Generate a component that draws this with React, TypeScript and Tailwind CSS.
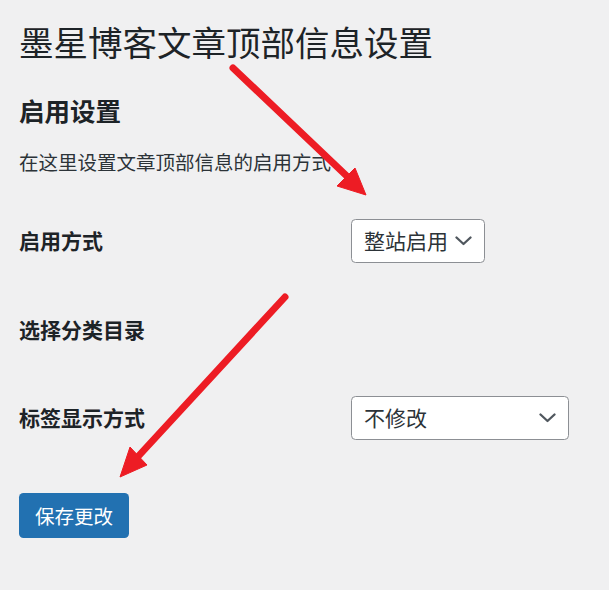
import React from 'react';

const font = { fontFamily: '"Noto Sans CJK SC", "Noto Sans", sans-serif' };

function Chevron() {
  return (
    <svg width="17" height="10" viewBox="0 0 17 10" className="shrink-0">
      <polyline points="1.5,1.5 8.5,8 15.5,1.5" fill="none" stroke="#50575e" strokeWidth="2.3" strokeLinecap="round" strokeLinejoin="round" />
    </svg>
  );
}

function Select({ value, width }: { value: string; width: string }) {
  return (
    <div className={`${width} h-[44px] flex items-center justify-between pl-[12px] pr-[12px] bg-white border border-[#8c8f94] rounded-[4.5px] text-[21px] text-[#2c3338]`}>
      <span>{value}</span>
      <Chevron />
    </div>
  );
}

function Row({ label, children, h }: { label: string; children?: React.ReactNode; h: string }) {
  return (
    <div className={`flex items-center ${h}`}>
      <div className="w-[332px] shrink-0 text-[21px] font-bold text-[#1d2327]">{label}</div>
      {children}
    </div>
  );
}

export default function App() {
  return (
    <div className="relative w-full h-[590px] bg-[#f0f0f1] overflow-hidden pl-[19px]" style={font}>
      <div className="h-[84px] flex items-center text-[34.5px] text-[#1d2327]">墨星博客文章顶部信息设置</div>
      <div className="h-[52px] flex items-center text-[25.5px] font-bold text-[#1d2327]">启用设置</div>
      <div className="h-[52px] flex items-center text-[19.5px] text-[#2c3338]">在这里设置文章顶部信息的启用方式</div>

      <div className="mt-[8px]">
        <Row label="启用方式" h="h-[89px]">
          <Select value="整站启用" width="w-[134px]" />
        </Row>
        <Row label="选择分类目录" h="h-[89px]" />
        <Row label="标签显示方式" h="h-[88px]">
          <Select value="不修改" width="w-[218px]" />
        </Row>
      </div>

      <button className="mt-[31px] h-[45px] w-[110px] bg-[#2271b1] rounded-[4.5px] text-white text-[19.5px]">保存更改</button>

      {/* red annotation arrows */}
      <svg className="absolute inset-0 pointer-events-none" width="609" height="590" viewBox="0 0 609 590">
        <g fill="#ed1c24" stroke="#ed1c24">
          <line x1="233" y1="68" x2="352" y2="181" strokeWidth="7" strokeLinecap="round" />
          <polygon points="366,195 337,186 355,168" strokeWidth="1" strokeLinejoin="round" />
          <line x1="285" y1="297" x2="133" y2="462" strokeWidth="7" strokeLinecap="round" />
          <polygon points="120,477 130,447 147,465" strokeWidth="1" strokeLinejoin="round" />
        </g>
      </svg>
    </div>
  );
}
